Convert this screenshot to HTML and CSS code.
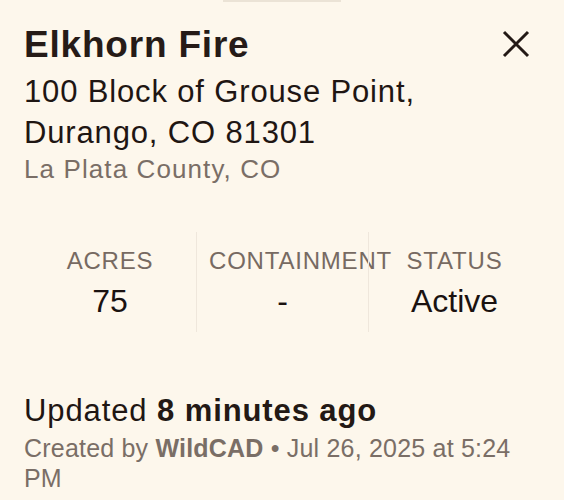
FILE: index.html
```html
<!DOCTYPE html>
<html>
<head>
  <title>Elkhorn Fire</title>
  <link rel="stylesheet" href="styles.css">
</head>
<body>
  <div class="sheet">
    <div class="grabber"></div>
    <div class="head">
      <div class="place">
        <h1 class="name">Elkhorn Fire</h1>
        <div class="address">100 Block of Grouse Point,<br>Durango, CO 81301</div>
        <div class="county">La Plata County, CO</div>
      </div>
      <a class="close" href="javascript:;">
        <svg width="28" height="28" viewBox="0 0 28 28">
          <path d="M2 2 L26 26 M26 2 L2 26" stroke="#231915" stroke-width="3" fill="none"/>
        </svg>
      </a>
    </div>
    <div class="stats">
      <div class="stat">
        <div class="label">ACRES</div>
        <div class="value">75</div>
      </div>
      <div class="stat">
        <div class="label">CONTAINMENT</div>
        <div class="value">-</div>
      </div>
      <div class="stat">
        <div class="label">STATUS</div>
        <div class="value">Active</div>
      </div>
    </div>
    <div class="updated">Updated <b>8 minutes ago</b></div>
    <div class="created">Created by <b>WildCAD</b> &bull; Jul 26, 2025 at 5:24 PM</div>
  </div>
</body>
</html>
```

FILE: styles.css
```css
html,body{
  margin:0;
  background:#fdf7ec;
}
.sheet{
  font-family:"Liberation Sans",Arial,sans-serif;
  color:#1f1613;
  padding:0 24px;
  min-height:500px;
  box-sizing:border-box;
}
.grabber{
  width:118px;
  height:2px;
  margin:0 auto;
  background:#ebe3d6;
}
.head{
  display:flex;
  justify-content:space-between;
  align-items:flex-start;
  padding-top:21px;
}
.name{
  margin:0;
  font-size:37px;
  line-height:44px;
  font-weight:bold;
  color:#261b17;
  letter-spacing:0.8px;
}
.address{
  margin-top:4px;
  font-size:31px;
  line-height:41px;
  letter-spacing:0.85px;
}
.county{
  font-size:26px;
  line-height:32px;
  color:#7a6e66;
  letter-spacing:1.1px;
}
.close{
  display:block;
  width:28px;
  height:28px;
  margin:7px 10px 0 0;
}
.close svg{
  display:block;
}
.stats{
  display:grid;
  grid-template-columns:repeat(3,minmax(0,1fr));
  margin-top:47px;
}
.stat{
  padding:14px 12px 11px;
  text-align:center;
  border-left:1px solid #efe7dc;
}
.stat:first-child{
  border-left:none;
}
.label{
  font-size:24px;
  line-height:30px;
  color:#776a62;
  letter-spacing:0.8px;
  white-space:nowrap;
}
.value{
  margin-top:5px;
  font-size:32px;
  line-height:40px;
  color:#1a1210;
}
.updated{
  margin-top:61px;
  font-size:31px;
  line-height:36px;
  letter-spacing:0.9px;
}
.updated b{
  color:#231915;
}
.created{
  margin-top:4px;
  font-size:25px;
  line-height:30px;
  color:#7a6e66;
  letter-spacing:0.2px;
}
```
